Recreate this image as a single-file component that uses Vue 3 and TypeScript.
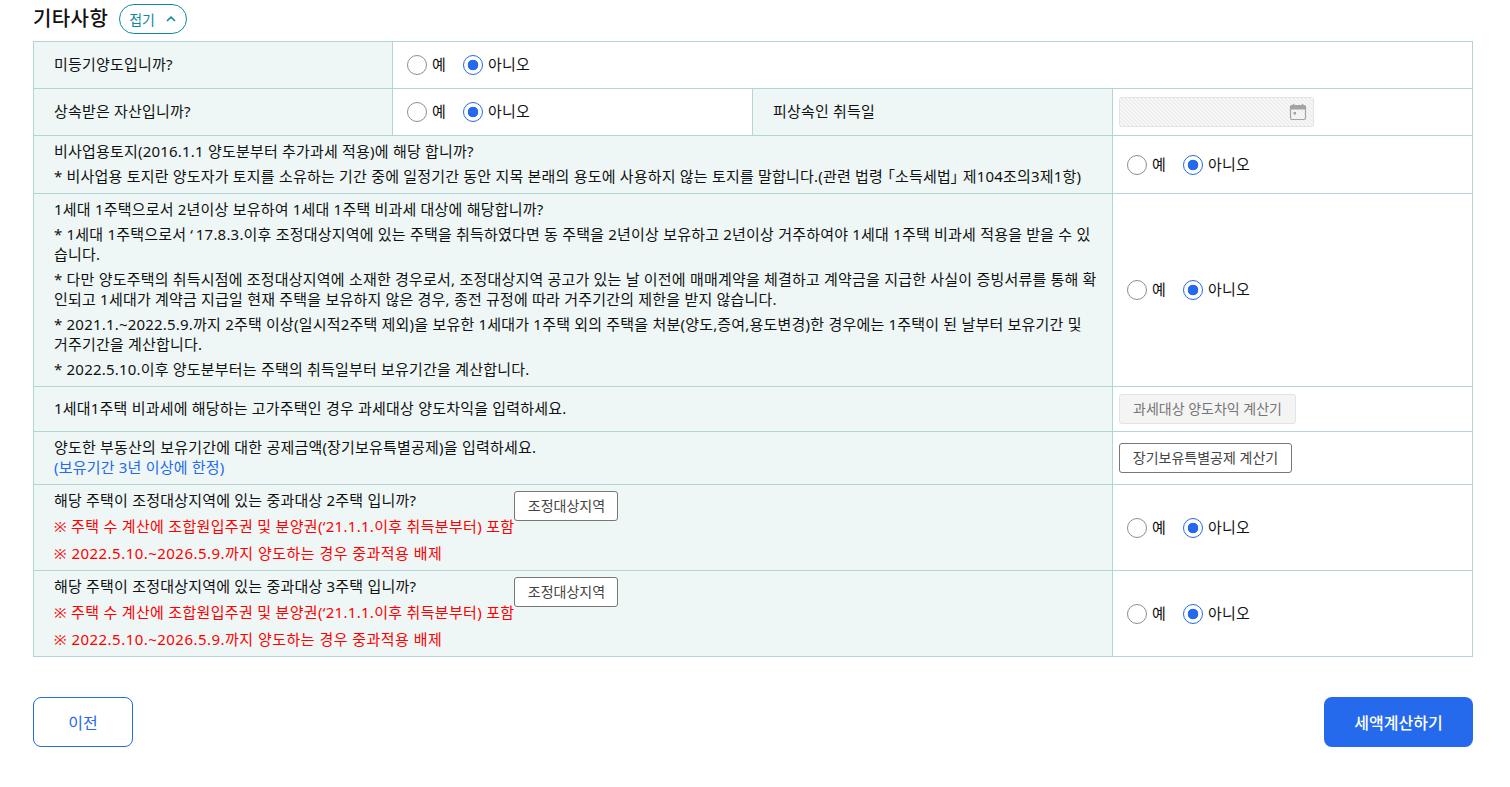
<script setup lang="ts">
const longNotes: string[] = [
  '* 1세대 1주택으로서 ‘\u200917.8.3.이후 조정대상지역에 있는 주택을 취득하였다면 동 주택을 2년이상 보유하고 2년이상 거주하여야 1세대 1주택 비과세 적용을 받을 수 있습니다.',
  '* 다만 양도주택의 취득시점에 조정대상지역에 소재한 경우로서, 조정대상지역 공고가 있는 날 이전에 매매계약을 체결하고 계약금을 지급한 사실이 증빙서류를 통해 확인되고 1세대가 계약금 지급일 현재 주택을 보유하지 않은 경우, 종전 규정에 따라 거주기간의 제한을 받지 않습니다.',
  '* 2021.1.~2022.5.9.까지 2주택 이상(일시적2주택 제외)을 보유한 1세대가 1주택 외의 주택을 처분(양도,증여,용도변경)한 경우에는 1주택이 된 날부터 보유기간 및 거주기간을 계산합니다.',
  '* 2022.5.10.이후 양도분부터는 주택의 취득일부터 보유기간을 계산합니다.',
]
const heavy: string[] = ['2', '3']
</script>

<template>
  <main class="page">
    <header class="head">
      <h2 class="title">기타사항</h2>
      <button class="fold" type="button">
        <span>접기</span>
        <svg width="10" height="6" viewBox="0 0 10 6"><path d="M1 5 L5 1.2 L9 5" fill="none" stroke="#0f8a9d" stroke-width="1.6" /></svg>
      </button>
    </header>

    <table class="grid">
      <colgroup><col class="c0" /><col class="c" /><col class="c" /><col class="c" /></colgroup>
      <tbody>
        <tr class="r1">
          <th>미등기양도입니까?</th>
          <td colspan="3" class="opt">
            <div class="radios">
              <span class="radio"><i class="dot"></i><span class="lb">예</span></span>
              <span class="radio"><i class="dot on"></i><span class="lb">아니오</span></span>
            </div>
          </td>
        </tr>
        <tr class="r1">
          <th>상속받은 자산입니까?</th>
          <td class="opt">
            <div class="radios">
              <span class="radio"><i class="dot"></i><span class="lb">예</span></span>
              <span class="radio"><i class="dot on"></i><span class="lb">아니오</span></span>
            </div>
          </td>
          <th>피상속인 취득일</th>
          <td class="ctl">
            <div class="date">
              <svg width="18" height="18" viewBox="0 0 18 18">
                <path d="M4.5 1v3M13.5 1v3" stroke="#a3a3a3" stroke-width="1.4" />
                <rect x="1.5" y="2.5" width="15" height="14" rx="1.5" fill="none" stroke="#a3a3a3" stroke-width="1.2" />
                <rect x="1.5" y="2.5" width="15" height="4" fill="#a3a3a3" />
                <rect x="4.5" y="9" width="2.5" height="2.5" fill="#a3a3a3" />
              </svg>
            </div>
          </td>
        </tr>
        <tr>
          <th colspan="3" class="stack">
            <p>비사업용토지(2016.1.1 양도분부터 추가과세 적용)에 해당 합니까?</p>
            <p>* 비사업용 토지란 양도자가 토지를 소유하는 기간 중에 일정기간 동안 지목 본래의 용도에 사용하지 않는 토지를 말합니다.(관련 법령 <span class="narrow">「소득세법」</span> 제104조의3제1항)</p>
          </th>
          <td class="opt">
            <div class="radios">
              <span class="radio"><i class="dot"></i><span class="lb">예</span></span>
              <span class="radio"><i class="dot on"></i><span class="lb">아니오</span></span>
            </div>
          </td>
        </tr>
        <tr>
          <th colspan="3" class="stack">
            <p>1세대 1주택으로서 2년이상 보유하여 1세대 1주택 비과세 대상에 해당합니까?</p>
            <p v-for="n in longNotes" :key="n">{{ n }}</p>
          </th>
          <td class="opt">
            <div class="radios">
              <span class="radio"><i class="dot"></i><span class="lb">예</span></span>
              <span class="radio"><i class="dot on"></i><span class="lb">아니오</span></span>
            </div>
          </td>
        </tr>
        <tr class="r5">
          <th colspan="3">1세대1주택 비과세에 해당하는 고가주택인 경우 과세대상 양도차익을 입력하세요.</th>
          <td class="ctl"><button class="btn off" type="button">과세대상 양도차익 계산기</button></td>
        </tr>
        <tr class="r6">
          <th colspan="3">
            <p>양도한 부동산의 보유기간에 대한 공제금액(장기보유특별공제)을 입력하세요.</p>
            <p class="blue">(보유기간 3년 이상에 한정)</p>
          </th>
          <td class="ctl"><button class="btn long" type="button">장기보유특별공제 계산기</button></td>
        </tr>
        <tr v-for="h in heavy" :key="h" class="r7">
          <th colspan="3" class="s7">
            <div class="rowq">
              <div>
                <p>해당 주택이 조정대상지역에 있는 중과대상 {{ h }}주택 입니까?</p>
                <p class="red">※ 주택 수 계산에 조합원입주권 및 분양권(‘21.1.1.이후 취득분부터) 포함</p>
                <p class="red">※ 2022.5.10.~2026.5.9.까지 양도하는 경우 중과적용 배제</p>
              </div>
              <button class="btn zone" type="button">조정대상지역</button>
            </div>
          </th>
          <td class="opt">
            <div class="radios">
              <span class="radio"><i class="dot"></i><span class="lb">예</span></span>
              <span class="radio"><i class="dot on"></i><span class="lb">아니오</span></span>
            </div>
          </td>
        </tr>
      </tbody>
    </table>

    <footer class="foot">
      <button class="prev" type="button">이전</button>
      <button class="calc" type="button">세액계산하기</button>
    </footer>
  </main>
</template>

<style>
html, body { margin: 0; background: #fff; }
</style>

<style scoped>
.page {
  box-sizing: border-box;
  width: 1510px;
  height: 787px;
  padding: 0 37px 0 33px;
  font-family: "Noto Sans", "Noto Sans CJK KR", sans-serif;
  font-size: 15px;
  letter-spacing: 0.2px;
  color: #111;
  overflow: hidden;
}
p { margin: 0; }
.head { display: flex; align-items: center; height: 41px; padding-bottom: 3px; box-sizing: border-box; }
.title { margin: 0 11px 0 0; font-size: 20px; font-weight: 500; line-height: 30px; letter-spacing: .4px; color: #111; }
.fold {
  display: flex; align-items: center; gap: 11px;
  box-sizing: border-box; width: 68px; height: 30px; padding: 0 0 0 9px;
  border: 1px solid #0f8a9d; border-radius: 15px; background: #fff;
  color: #0f8a9d; font: inherit; font-size: 14px;
}
.grid { border-collapse: collapse; table-layout: fixed; width: 1439px; }
.c0 { width: 359px; }
.c { width: 360px; }
th, td { border: 1px solid #b3d5d8; box-sizing: border-box; line-height: 20px; padding: 5px 0 7px; }
th { background: #eef7f6; font-weight: 400; text-align: left; padding-left: 20px; padding-right: 14px; vertical-align: middle; }
.r1 { height: 47px; }
.r5 { height: 45px; }
.r6 { height: 53px; }
.r7 { height: 86px; }
.opt { padding: 6px 0 6px 14px; }
.ctl { padding: 6px 0 6px 6px; }
.radios { display: flex; gap: 17px; }
.radio { display: flex; align-items: center; gap: 5px; }
.lb { position: relative; top: -1px; }
.dot {
  box-sizing: border-box; width: 20px; height: 20px; border-radius: 50%;
  border: 1px solid #8e8e8e; background: #fff; display: block;
}
.dot.on { border-color: #2569ec; background: radial-gradient(circle, #2569ec 0 5px, #fff 5.6px); }
.date {
  box-sizing: border-box; width: 195px; height: 30px; padding-right: 6px;
  display: flex; align-items: center; justify-content: flex-end;
  border: 1px solid #e3e3e3; border-radius: 3px;
  background: repeating-linear-gradient(45deg, #e8e8e8 0 1px, #f6f6f6 1px 2.83px);
}
.narrow { font-feature-settings: "palt"; }
.stack p + p { margin-top: 5px; }
.blue { color: #2569ec; }
.red { color: #f00; margin-top: 6px; letter-spacing: .31px; }
.red + .red { margin-top: 7px; letter-spacing: .47px; }
.s7 { padding-right: 0; vertical-align: top; }
.rowq { display: flex; align-items: flex-start; }
.btn {
  display: block; box-sizing: border-box; height: 30px; padding: 0;
  border: 1px solid #777; border-radius: 3px; background: #fff; text-align: center;
  color: #444; font: inherit; font-size: 14px; white-space: nowrap; width: 173px;
}
.btn.off { border-color: #e3e3e3; background: #f4f4f4; color: #767676; width: 177px; }
.zone { width: 104px; margin-top: 1px; }
.foot { display: flex; justify-content: space-between; margin-top: 40px; }
.prev, .calc { box-sizing: border-box; height: 50px; border-radius: 8px; font: inherit; font-weight: 500; font-size: 16px; }
.prev { width: 100px; border: 1px solid #2569ec; background: #fff; color: #2569ec; font-weight: 400; }
.calc { width: 149px; border: 0; background: #2569ec; color: #fff; }
</style>
